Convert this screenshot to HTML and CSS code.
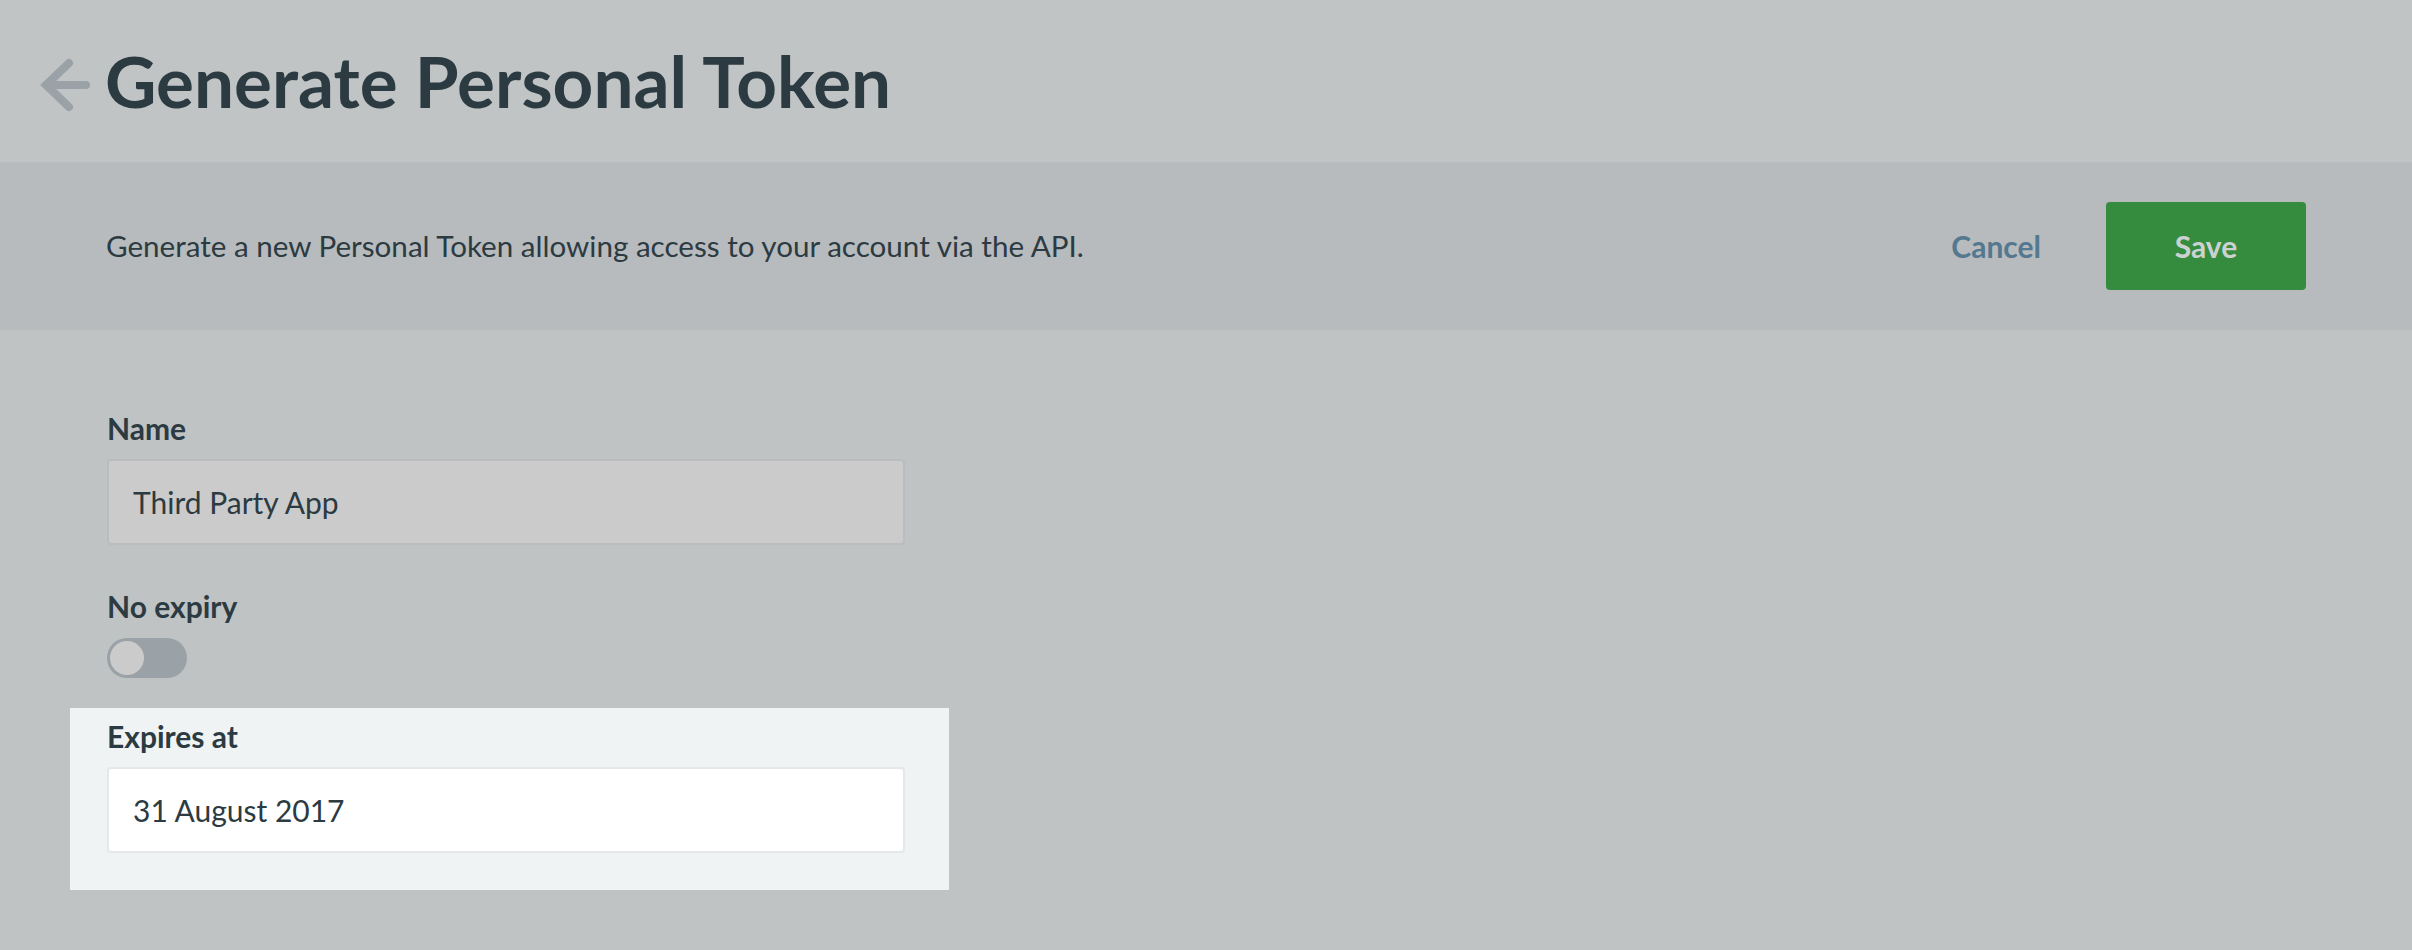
FILE: index.html
```html
<!DOCTYPE html>
<html lang="en">
<head>
<meta charset="utf-8">
<title>Generate Personal Token</title>
<link rel="stylesheet" href="styles.css">
</head>
<body>
<header class="page-header">
  <a class="back-link" href="#" aria-label="Back">
    <svg class="back-icon" width="50" height="54" viewBox="0 0 50 54" aria-hidden="true">
      <path d="M29 5 L6 27 L29 49 M6 27 H46" fill="none" stroke="#9aa2a7" stroke-width="8" stroke-linecap="round" stroke-linejoin="miter"/>
    </svg>
  </a>
  <h1 class="page-title">Generate Personal Token</h1>
</header>
<section class="intro-bar">
  <p class="intro-text">Generate a new Personal Token allowing access to your account via the API.</p>
  <div class="actions">
    <button class="btn-cancel" type="button">Cancel</button>
    <button class="btn-save" type="button">Save</button>
  </div>
</section>
<main class="form">
  <div class="field field-name">
    <label class="field-label">Name</label>
    <input class="text-input text-input-muted" type="text" value="Third Party App" readonly>
  </div>
  <div class="field field-toggle">
    <label class="field-label">No expiry</label>
    <span class="toggle"><span class="toggle-knob"></span></span>
  </div>
  <div class="field field-highlight">
    <label class="field-label">Expires at</label>
    <input class="text-input" type="text" value="31 August 2017" readonly>
  </div>
</main>
</body>
</html>
```
FILE: styles.css
```css
* { box-sizing: border-box; }
html, body { margin: 0; padding: 0; }
body {
  background: #bfc3c4;
  font-family: Lato, "Noto Sans", sans-serif;
  color: #2c3a42;
  height: 950px;
  overflow: hidden;
}
.page-header {
  display: flex;
  align-items: center;
  height: 162px;
  padding: 0 0 0 40px;
  background: #c0c4c5;
}
.back-link { display: flex; margin-top: 8px; }
.page-title {
  margin: 0 0 0 15px;
  font-size: 71px;
  font-weight: 700;
  line-height: 86px;
  color: #2c3a42;
}
.intro-bar {
  display: flex;
  align-items: center;
  justify-content: space-between;
  height: 168px;
  padding: 0 106px;
  background: #b7bbbd;
}
.intro-text {
  margin: 0;
  font-size: 29.6px;
  line-height: 36px;
}
.actions {
  display: flex;
  align-items: center;
  gap: 65px;
}
.btn-cancel {
  background: none;
  border: 0;
  padding: 0;
  font-family: inherit;
  font-size: 30px;
  font-weight: 700;
  color: #54788f;
}
.btn-save {
  width: 200px;
  height: 88px;
  border: 0;
  border-radius: 4px;
  background: #358c3e;
  color: #ccd2d1;
  font-family: inherit;
  font-size: 30px;
  font-weight: 700;
}
.form {
  padding: 80px 0 0 107px;
}
.field { display: flex; flex-direction: column; align-items: flex-start; }
.field-label {
  font-size: 30px;
  font-weight: 700;
  line-height: 36px;
  margin-bottom: 13px;
}
.text-input {
  width: 798px;
  height: 86px;
  padding: 0 24px;
  border: 2px solid #e4e8e9;
  border-radius: 4px;
  background: #ffffff;
  font-family: inherit;
  font-size: 30px;
  color: #2c3a42;
  outline: none;
}
.text-input-muted {
  background: #cbcbcb;
  border-color: #b9bdbf;
}
.field-toggle { margin-top: 43px; }
.field-toggle .field-label { margin-bottom: 14px; }
.toggle {
  display: block;
  width: 80px;
  height: 40px;
  border-radius: 20px;
  background: #9aa2a7;
  padding: 3px;
}
.toggle-knob {
  display: block;
  width: 34px;
  height: 34px;
  border-radius: 50%;
  background: #cbcbcb;
}
.field-highlight {
  width: 879px;
  margin: 30px 0 0 -37px;
  padding: 10px 44px 37px 37px;
  background: #eff3f4;
}
```
